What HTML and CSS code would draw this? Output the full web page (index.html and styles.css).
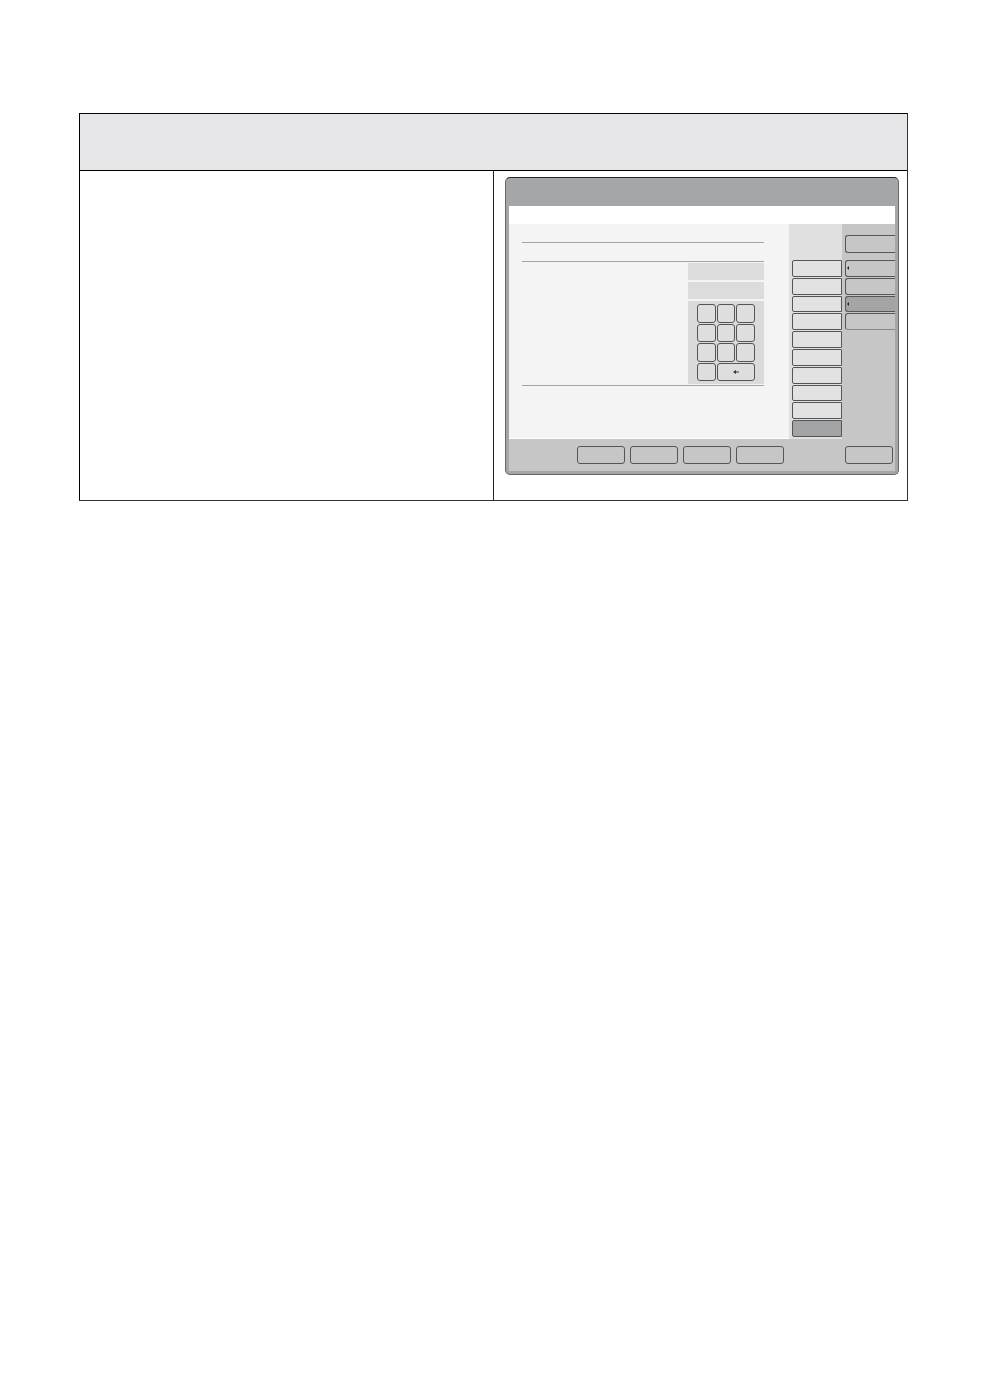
FILE: index.html
```html
<!DOCTYPE html>
<html lang="en">

<head>
  <meta charset="UTF-8">
  <meta name="viewport" content="width=device-width, initial-scale=1.0">
  <title>Control Panel</title>
  <link rel="stylesheet" href="styles.css">
</head>

<body>
  <main class="sheet">
    <div class="sheet-head"></div>
    <div class="sheet-body">
      <div class="notes"></div>
      <div class="figure">
        <div class="device">
          <div class="title-bar"></div>
          <div class="status-bar"></div>

          <div class="screen">
            <!-- Settings area -->
            <div class="content">
              <div class="line"></div>
              <div class="line second"></div>
              <div class="entry">
                <input class="field" type="text" aria-label="Value 1">
                <input class="field" type="text" aria-label="Value 2">
                <div class="keypad">
                  <button class="key"></button>
                  <button class="key"></button>
                  <button class="key"></button>
                  <button class="key"></button>
                  <button class="key"></button>
                  <button class="key"></button>
                  <button class="key"></button>
                  <button class="key"></button>
                  <button class="key"></button>
                  <button class="key"></button>
                  <button class="key wide" aria-label="Back">
                    <svg width="6" height="4" viewBox="0 0 6 4"><path d="M0 2L3 0V1.5H6V2.5H3V4Z" fill="#333"/></svg>
                  </button>
                </div>
              </div>
              <div class="line"></div>
            </div>

            <!-- Menu -->
            <div class="menu">
              <button class="item"></button>
              <button class="item"></button>
              <button class="item"></button>
              <button class="item"></button>
              <button class="item"></button>
              <button class="item"></button>
              <button class="item"></button>
              <button class="item"></button>
              <button class="item"></button>
              <button class="item active"></button>
            </div>

            <!-- Side tabs -->
            <div class="side">
              <button class="tab top"></button>
              <div class="tabs">
                <button class="tab" aria-label="Open tab 1">
                  <svg width="3" height="4" viewBox="0 0 3 4"><path d="M0 2L2 0V4Z" fill="#222"/></svg>
                </button>
                <button class="tab"></button>
                <button class="tab active" aria-label="Open tab 3">
                  <svg width="3" height="4" viewBox="0 0 3 4"><path d="M0 2L2 0V4Z" fill="#222"/></svg>
                </button>
                <button class="tab last"></button>
              </div>
            </div>
          </div>

          <div class="footer">
            <button class="action"></button>
            <button class="action"></button>
            <button class="action"></button>
            <button class="action"></button>
            <button class="action end"></button>
          </div>
        </div>
      </div>
    </div>
  </main>
</body>

</html>
```
FILE: styles.css
```css
* {
  box-sizing: border-box;
}

body {
  font-family: "Liberation Sans", Arial, sans-serif;
  margin: 0;
  padding: 113px 78px 0 79px;
  background: #fff;
}

button,
input {
  display: block;
  margin: 0;
  padding: 0;
  min-width: 0;
  min-height: 0;
  font-size: 10px;
}

button {
  border: 1px solid #555;
  border-radius: 3px;
  background: #c6c6c6;
  cursor: pointer;
}

svg {
  display: block;
}

/* Outer frame */
.sheet {
  border: 1px solid #000;
  border-right-color: #333;
  border-bottom-color: #333;
}

.sheet-head {
  height: 57px;
  background: #e6e6e8;
  border-bottom: 1px solid #000;
}

.sheet-body {
  display: grid;
  grid-template-columns: 1fr 1fr;
}

.notes {
  border-right: 1px solid #222;
}

.figure {
  padding: 6px 8px 25px 11px;
}

/* Device */
.device {
  border: 1px solid #666;
  border-top-color: #222;
  border-radius: 5px;
  background: #a5a6a8;
  padding: 0 3px 3px;
  overflow: hidden;
}

.title-bar {
  height: 28px;
}

.status-bar {
  height: 18px;
  background: #fff;
}

.screen {
  display: flex;
  height: 215px;
}

.content {
  flex: 1;
  background: #f4f4f4;
  padding: 18px 25px 0 13px;
  border-bottom: 1px solid #fff;
}

.line {
  height: 1px;
  background: #a3a3a3;
}

.line.second {
  margin: 18px 0 1px;
}

.entry {
  width: 76px;
  margin-left: auto;
  margin-bottom: 1px;
}

.field {
  width: 100%;
  height: 17px;
  margin-bottom: 2px;
  border: none;
  border-radius: 0;
  background: #dcdcdc;
}

.keypad {
  display: grid;
  grid-template-columns: repeat(3, 1fr);
  grid-template-rows: repeat(4, 1fr);
  gap: 1px;
  height: 83px;
  padding: 3px 9px;
  background: #dadada;
}

.key {
  background: #dedede;
}

.key.wide {
  grid-column: span 2;
  display: flex;
  align-items: center;
  justify-content: center;
}

.menu {
  width: 53px;
  display: grid;
  grid-template-rows: repeat(10, 1fr);
  gap: 1px;
  padding: 36px 0 2px 3px;
  background: #e0e0e0;
}

.item {
  background: #e2e2e2;
  border-radius: 2px 0 0 2px;
}

.active {
  background: #a3a4a5;
}

.side {
  width: 53px;
  padding: 11px 0 0 3px;
  background: #c6c6c6;
}

.tab {
  display: flex;
  align-items: center;
  width: 100%;
  padding-left: 1px;
  border-right: none;
  border-radius: 3px 0 0 3px;
}

.tab.active {
  background: #a3a4a5;
}

.tab.top {
  height: 18px;
}

.tab.last {
  border-bottom-color: #888;
}

.tabs {
  display: grid;
  grid-template-rows: repeat(4, 1fr);
  gap: 1px;
  height: 70px;
  margin-top: 7px;
}

.footer {
  display: flex;
  gap: 5px;
  padding: 7px 2px 7px 68px;
  background: #c6c6c6;
}

.action {
  width: 48px;
  height: 18px;
}

.action.end {
  margin-left: auto;
}
```
